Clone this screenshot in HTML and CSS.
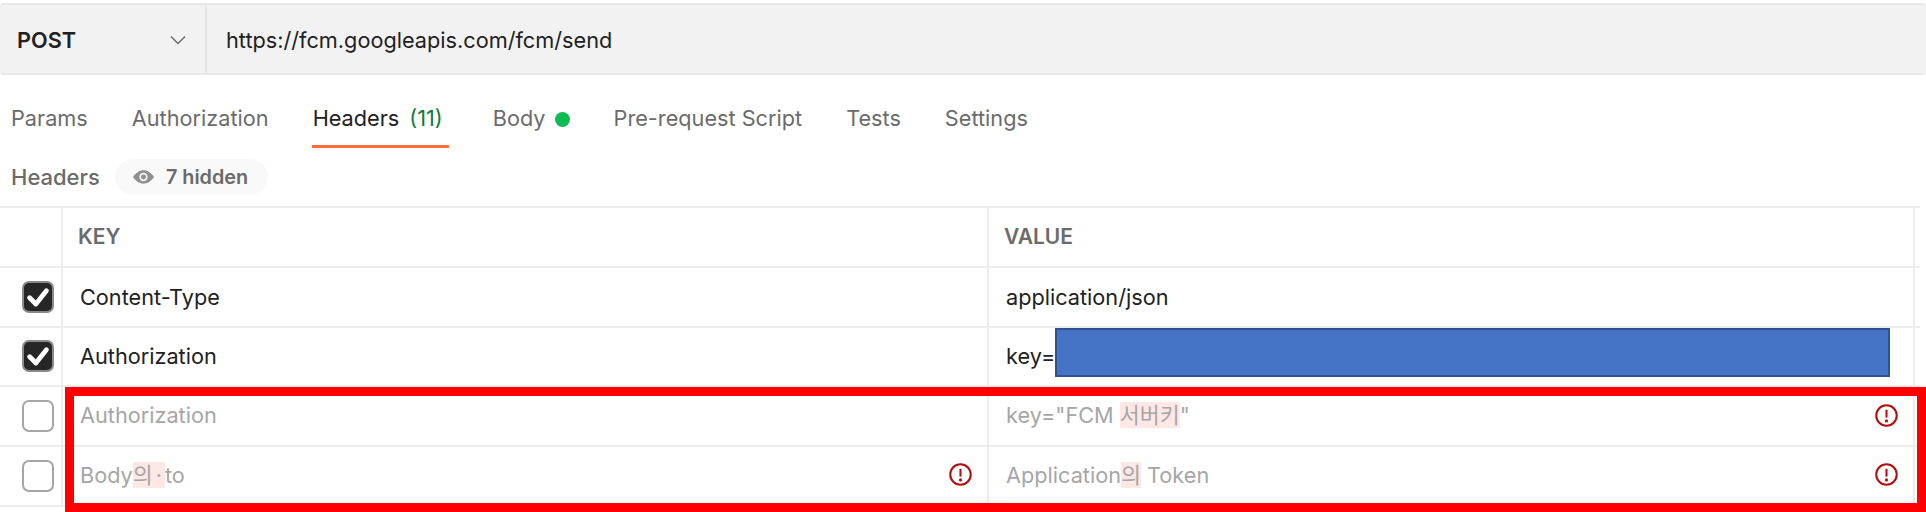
FILE: index.html
```html
<!DOCTYPE html>
<html lang="ko">
<head>
<meta charset="utf-8">
<title>Postman headers</title>
<link rel="stylesheet" href="styles.css">
</head>
<body>
<div class="page">
  <div class="request-bar">
    <div class="method"><span>POST</span>
      <svg class="chevron" viewBox="0 0 16 10"><path d="M1 1.5 8 8.5 15 1.5"/></svg>
    </div>
    <div class="url">https://fcm.googleapis.com/fcm/send</div>
  </div>
  <nav class="tabs">
    <span class="tab">Params</span>
    <span class="tab">Authorization</span>
    <span class="tab active">Headers<em>(11)</em></span>
    <span class="tab">Body<i class="dot"></i></span>
    <span class="tab">Pre-request Script</span>
    <span class="tab">Tests</span>
    <span class="tab">Settings</span>
  </nav>
  <div class="subhead">
    <span class="subhead-label">Headers</span>
    <span class="pill">
      <svg class="eye" viewBox="0 0 22 14"><path class="eye-shape" d="M0 7C3.500 2 7.500 0 11 0s7.500 2 11 7c-3.500 5-7.500 7-11 7S3.500 12 0 7Z"/><circle class="eye-ring" cx="11" cy="7" r="4.400"/><circle class="eye-shape" cx="11" cy="7" r="2.600"/></svg>
      <span>7 hidden</span>
    </span>
  </div>
  <div class="table">
    <div class="row head">
      <div class="cell check"></div>
      <div class="cell key">KEY</div>
      <div class="cell value">VALUE</div>
    </div>
    <div class="row">
      <div class="cell check"><span class="box on"><svg viewBox="0 0 20 20"><path d="M4 10.500 8.500 15 16 5.500"/></svg></span></div>
      <div class="cell key">Content-Type</div>
      <div class="cell value">application/json</div>
    </div>
    <div class="row">
      <div class="cell check"><span class="box on"><svg viewBox="0 0 20 20"><path d="M4 10.500 8.500 15 16 5.500"/></svg></span></div>
      <div class="cell key">Authorization</div>
      <div class="cell value">key=<span class="redact"></span></div>
    </div>
    <div class="row off">
      <div class="cell check"><span class="box"></span></div>
      <div class="cell key">Authorization</div>
      <div class="cell value"><span>key="FCM <mark>서버키</mark>"</span>
        <svg class="warn" viewBox="0 0 22 22"><circle cx="11" cy="11" r="9.800"/><path d="M11 5.500v7.500"/><circle class="warn-dot" cx="11" cy="16.200" r="1.500"/></svg>
      </div>
    </div>
    <div class="row off">
      <div class="cell check"><span class="box"></span></div>
      <div class="cell key"><span>Body<mark>의<b>·</b></mark>to</span>
        <svg class="warn" viewBox="0 0 22 22"><circle cx="11" cy="11" r="9.800"/><path d="M11 5.500v7.500"/><circle class="warn-dot" cx="11" cy="16.200" r="1.500"/></svg>
      </div>
      <div class="cell value"><span>Application<mark>의</mark> Token</span>
        <svg class="warn" viewBox="0 0 22 22"><circle cx="11" cy="11" r="9.800"/><path d="M11 5.500v7.500"/><circle class="warn-dot" cx="11" cy="16.200" r="1.500"/></svg>
      </div>
    </div>
  </div>
  <div class="callout"></div>
</div>
</body>
</html>
```
FILE: styles.css
```css
* { box-sizing: border-box; }
html, body { margin: 0; background: #fff; }
body { font-family: Inter, "Noto Sans CJK KR", sans-serif; overflow: hidden; }
.page { position: relative; width: 1926px; height: 512px; overflow: hidden; padding-top: 3px; }

.request-bar { display: flex; height: 72px; background: #f2f2f2; border: 2px solid #e8e8e8; border-left: 0; border-right: 0; border-radius: 4px; font-size: 21.700px; color: #212121; }
.method { width: 207px; flex: none; display: flex; align-items: center; justify-content: space-between; padding: 2px 19px 0 17px; border-right: 2px solid #e6e6e6; font-weight: 600; }
.chevron { width: 16px; height: 10px; fill: none; stroke: #6b6b6b; stroke-width: 1.500; }
.url { display: flex; align-items: center; padding: 2px 0 0 19px; }

.tabs { display: flex; gap: 44px; height: 73px; padding-left: 11px; font-size: 21.700px; color: #6b6b6b; }
.tab { display: flex; align-items: center; height: 73px; padding-top: 13px; white-space: pre; }
.tab.active { color: #212121; border-bottom: 3px solid #ff6c37; padding: 16px 6px 0 1px; margin-left: -1px; }
.tab em { font-style: normal; color: #0f7b3b; margin-left: 10px; }
.dot { width: 15px; height: 15px; border-radius: 50%; background: #0cbb52; margin: 2px 0 0 9px; }

.subhead { display: flex; align-items: center; gap: 15px; height: 58px; padding-left: 11px; }
.subhead-label { font-size: 22px; font-weight: 500; color: #6b6b6b; }
.pill { display: flex; align-items: center; gap: 12px; height: 36px; padding: 0 20px 0 18px; border-radius: 18px; background: #f9f9f9; font-size: 19.800px; font-weight: 600; color: #6b6b6b; }
.eye { width: 21px; height: 14px; }
.eye-shape { fill: #8f8f8f; }
.eye-ring { fill: #f9f9f9; }

.table { border-top: 2px solid #ededed; margin-right: 6px; }
.row { display: grid; grid-template-columns: 63px 926px 926px; height: 59.750px; border-bottom: 2px solid #ededed; font-size: 21.700px; color: #212121; }
.row.head { font-size: 21px; font-weight: 600; color: #6b6b6b; }
.row.off { color: #a6a6a6; }
.cell { display: flex; align-items: center; justify-content: space-between; padding: 0 16px; border-right: 2px solid #ededed; }
.cell.check { justify-content: flex-start; padding: 0 0 0 22px; }
.head .cell { padding-left: 15px; }
.key { padding-left: 17px; }
.value { position: relative; justify-content: flex-start; padding-left: 17px; }
.off .key, .off .value { padding-bottom: 2px; }
.value .warn { position: absolute; right: 15px; }
.key .warn { margin-right: -1px; }
.box { display: flex; width: 32px; height: 32px; border: 2px solid #a6a6a6; border-radius: 7px; background: #fff; }
.box.on { background: #262626; border-color: #8a8a8a; }
.box svg { width: 100%; height: 100%; fill: none; stroke: #fff; stroke-width: 3.400; stroke-linecap: round; stroke-linejoin: round; }
mark { background: #fde8e6; color: inherit; line-height: 0; }
mark b { font-weight: 400; padding: 0 3px; }
.warn { flex: none; width: 23px; height: 23px; fill: none; stroke: #b30f0f; stroke-width: 2; }
.warn-dot { fill: #b30f0f; stroke: none; }

.redact { position: absolute; left: 66px; top: 0; width: 835px; height: 49px; background: #4472c4; border: 2px solid #2f528f; }
.callout { position: absolute; left: 65px; top: 387px; width: 1861px; height: 125px; border: 9px solid #ff0000; }
```
